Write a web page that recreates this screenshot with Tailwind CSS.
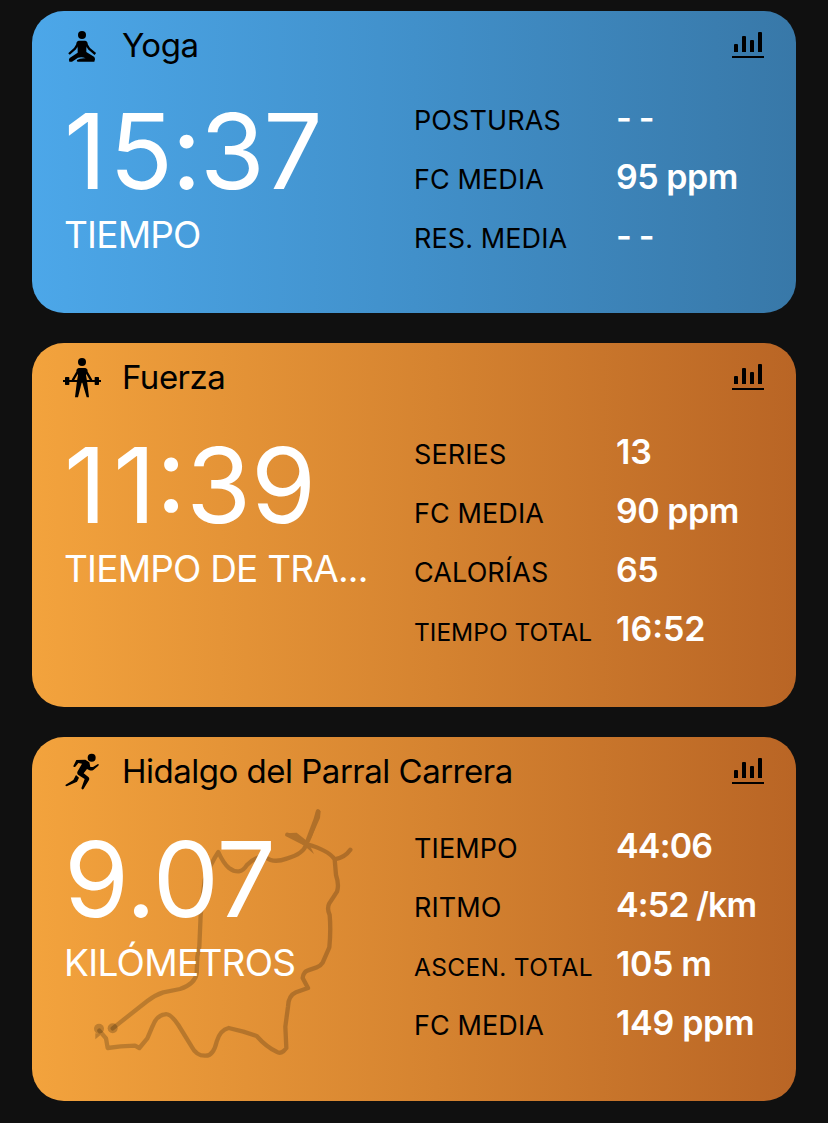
<!DOCTYPE html>
<html lang="es">
<head>
    <meta charset="UTF-8">
    <meta name="viewport" content="width=device-width, initial-scale=1.0">
    <title>Actividades</title>
    <script src="https://cdn.jsdelivr.net/npm/@tailwindcss/browser@4"></script>
</head>
<body class="bg-[#101010] font-['Inter',sans-serif] text-black">

    <main class="flex h-[1123px] w-[828px] flex-col gap-[30px] overflow-hidden px-8 pt-[11px]">

        <!-- Yoga -->
        <article class="h-[302px] shrink-0 rounded-[32px] bg-linear-to-r from-[#4ca7e9] via-[#4190ca] to-[#3878a8]">
            <header class="flex h-[68px] items-center pr-8 pl-[26px]">
                <svg class="size-12 shrink-0" viewBox="9 3 144 144">
                    <circle cx="81" cy="45" r="12"/>
                    <path d="M72 66L60 86 42 102M90 66l12 20 19 16" fill="none" stroke="#000" stroke-width="7" stroke-linejoin="round"/>
                    <path d="M71 62h20q5 1 7 7l-4 16v11l24 15q5 7 0 14H68q-4-1-2-5 8-6 26-5-18-8-32 4l-9 6h-8q-3-7 1-11l24-16V85l-4-16q2-6 7-7z"/>
                </svg>
                <h2 class="ml-4 flex-1 pt-0.5 text-[33px] tracking-[-0.5px]">Yoga</h2>
                <svg class="h-[26px] w-8" viewBox="0 0 32 26"><path d="M2 20v-7q0-1 1-1h2q1 0 1 1v7zM10 20V5q0-1 1-1h2q1 0 1 1v15zM18 20V9q0-1 1-1h2q1 0 1 1v11zM26 20V1q0-1 1-1h2q1 0 1 1v19zM0 24h32v2H0z"/></svg>
            </header>
            <div class="flex pt-[9px]">
                <div class="w-[382px] pt-2.5 pl-8 whitespace-nowrap text-white">
                    <p class="text-[105px] leading-[105px] tracking-[-1.6px]"><span class="tracking-[2.5px]">1</span>5:37</p>
                    <p class="text-[37px] leading-[63px] tracking-[-0.8px]">TIEMPO</p>
                </div>
                <dl class="text-[27px] leading-[59px] tracking-[0.1px] whitespace-nowrap">
                    <div class="flex h-[59px] items-baseline">
                        <dt class="w-[202px]">POSTURAS</dt>
                        <dd class="text-[34px] font-semibold tracking-[-0.8px] text-white">- -</dd>
                    </div>
                    <div class="flex h-[59px] items-baseline">
                        <dt class="w-[202px]">FC MEDIA</dt>
                        <dd class="text-[34px] font-semibold tracking-[-0.5px] text-white">95 ppm</dd>
                    </div>
                    <div class="flex h-[59px] items-baseline">
                        <dt class="w-[202px]">RES. MEDIA</dt>
                        <dd class="text-[34px] font-semibold tracking-[-0.8px] text-white">- -</dd>
                    </div>
                </dl>
            </div>
        </article>

        <!-- Fuerza -->
        <article class="h-[364px] shrink-0 rounded-[32px] bg-linear-to-r from-[#f3a33d] via-[#d58330] via-53% to-[#b96525]">
            <header class="flex h-[68px] items-center pr-8 pl-[26px]">
                <svg class="size-12 shrink-0" viewBox="9 9 144 144">
                    <circle cx="81" cy="36" r="12"/>
                    <path d="M72 58L53 91M90 58l19 33" fill="none" stroke="#000" stroke-width="7"/>
                    <path d="M71 54h20q5 1 7 6l-5 16 3 16 6 50h-7L82 98h-2l-11 44H60l6-50 3-16-5-16q2-5 7-6z"/>
                    <path d="M24 90h114v6H24z"/>
                    <rect x="30" y="81" width="13" height="24" rx="2"/>
                    <rect x="119" y="81" width="13" height="24" rx="2"/>
                </svg>
                <h2 class="ml-4 flex-1 pt-0.5 text-[33px] tracking-[-0.5px]">Fuerza</h2>
                <svg class="h-[26px] w-8" viewBox="0 0 32 26"><path d="M2 20v-7q0-1 1-1h2q1 0 1 1v7zM10 20V5q0-1 1-1h2q1 0 1 1v15zM18 20V9q0-1 1-1h2q1 0 1 1v11zM26 20V1q0-1 1-1h2q1 0 1 1v19zM0 24h32v2H0z"/></svg>
            </header>
            <div class="flex pt-[11px]">
                <div class="w-[382px] pt-2.5 pl-8 whitespace-nowrap text-white">
                    <p class="text-[105px] leading-[105px]"><span class="tracking-[6.5px]">1</span>1:39</p>
                    <p class="text-[37px] leading-[63px] tracking-[-0.8px]">TIEMPO DE TRA...</p>
                </div>
                <dl class="text-[27px] leading-[59px] tracking-[0.1px] whitespace-nowrap">
                    <div class="flex h-[59px] items-baseline">
                        <dt class="w-[202px]">SERIES</dt>
                        <dd class="text-[34px] font-semibold tracking-[-0.2px] text-white">13</dd>
                    </div>
                    <div class="flex h-[59px] items-baseline">
                        <dt class="w-[202px]">FC MEDIA</dt>
                        <dd class="text-[34px] font-semibold tracking-[-0.5px] text-white">90 ppm</dd>
                    </div>
                    <div class="flex h-[59px] items-baseline">
                        <dt class="w-[202px]">CALORÍAS</dt>
                        <dd class="text-[34px] font-semibold tracking-[-0.5px] text-white">65</dd>
                    </div>
                    <div class="flex h-[59px] items-baseline">
                        <dt class="w-[202px] text-[24.5px] tracking-normal">TIEMPO TOTAL</dt>
                        <dd class="text-[34px] font-semibold tracking-normal text-white">16:52</dd>
                    </div>
                </dl>
            </div>
        </article>

        <!-- Carrera -->
        <article class="relative isolate h-[364px] shrink-0 rounded-[32px] bg-linear-to-r from-[#f3a33d] via-[#d58330] via-53% to-[#b96525]">
            <!-- route drawn behind the numbers -->
            <svg class="absolute top-[63px] left-12 -z-10 h-[270px] w-[290px]" viewBox="0 0 870 810" fill="none" stroke="#000" stroke-width="13" stroke-linecap="round" stroke-linejoin="round">
                <g opacity=".2">
                    <path d="M98 685L202 603Q225 585 250 577L300 567Q345 552 350 520L352 470 358 440 362 345 374 240Q392 190 415 156 430 190 447 204 480 228 500 196 530 165 558 172 580 190 620 176 670 162 678 135L712 45M684 122Q700 85 714 34M622 104L678 132Q745 150 764 178L768 225Q778 255 771 275L748 310Q740 325 749 345 753 390 748 442L728 488Q722 498 710 502L684 511Q670 515 668 534L684 564 648 577Q625 587 624 620L616 680 619 744Q604 765 590 755 560 742 530 708L490 695 446 684Q420 690 410 725 400 768 376 767 350 768 335 740L295 675Q270 638 255 643 230 645 217 680L202 715 178 744 165 737Q120 738 83 744L78 715 58 692M764 178Q795 172 811 149"/>
                    <path d="M616 100l34-2 34 27 18 37-32-27z" fill="#000" stroke="none"/>
                    <path d="M705 52l3-18q6-10 14 0l-2 20-28 64-8-4z" fill="#000" stroke="none"/>
                    <path d="M46 700v18l20-17z" fill="#000" stroke="none"/>
                </g>
                <g fill="#000" fill-opacity=".2" stroke="none">
                    <circle cx="57" cy="686" r="15"/>
                    <circle cx="98" cy="685" r="15"/>
                </g>
            </svg>
            <header class="flex h-[68px] items-center pr-8 pl-[26px]">
                <svg class="size-12 shrink-0" viewBox="9 6 144 144">
                    <circle cx="110" cy="38" r="12"/>
                    <path d="M64 45l27-1 12 8 3 14 8 0 15-9q4 0 1 5l-15 13q-6 3-13 0l-6-3-10 13 15 12q3 3 1 8L86 131q-4 5-7-1l10-28-20-13q-4-4-1-10l13-23-11-2-9 11q-6 3-6-2z"/>
                    <path d="M63 90l9 8-6 12-31 14q-6-1-3-5l23-14z"/>
                </svg>
                <h2 class="ml-4 flex-1 pt-0.5 text-[33px] tracking-[-0.5px]">Hidalgo del Parral Carrera</h2>
                <svg class="h-[26px] w-8" viewBox="0 0 32 26"><path d="M2 20v-7q0-1 1-1h2q1 0 1 1v7zM10 20V5q0-1 1-1h2q1 0 1 1v15zM18 20V9q0-1 1-1h2q1 0 1 1v11zM26 20V1q0-1 1-1h2q1 0 1 1v19zM0 24h32v2H0z"/></svg>
            </header>
            <div class="flex pt-[11px]">
                <div class="w-[382px] pt-2.5 pl-8 whitespace-nowrap text-white">
                    <p class="text-[105px] leading-[105px] tracking-[-0.6px]">9.07</p>
                    <p class="text-[37px] leading-[63px] tracking-[-0.7px]">KILÓMETROS</p>
                </div>
                <dl class="text-[27px] leading-[59px] tracking-[0.1px] whitespace-nowrap">
                    <div class="flex h-[59px] items-baseline">
                        <dt class="w-[202px]">TIEMPO</dt>
                        <dd class="text-[34px] font-semibold tracking-[-0.8px] text-white">44:06</dd>
                    </div>
                    <div class="flex h-[59px] items-baseline">
                        <dt class="w-[202px]">RITMO</dt>
                        <dd class="text-[34px] font-semibold tracking-[-0.9px] text-white">4:52 /km</dd>
                    </div>
                    <div class="flex h-[59px] items-baseline">
                        <dt class="w-[202px] text-[24.5px] tracking-[0.3px]">ASCEN. TOTAL</dt>
                        <dd class="text-[34px] font-semibold tracking-[-0.4px] text-white">105 m</dd>
                    </div>
                    <div class="flex h-[59px] items-baseline">
                        <dt class="w-[202px]">FC MEDIA</dt>
                        <dd class="text-[34px] font-semibold tracking-[-0.3px] text-white">149 ppm</dd>
                    </div>
                </dl>
            </div>
        </article>

    </main>

</body>
</html>
